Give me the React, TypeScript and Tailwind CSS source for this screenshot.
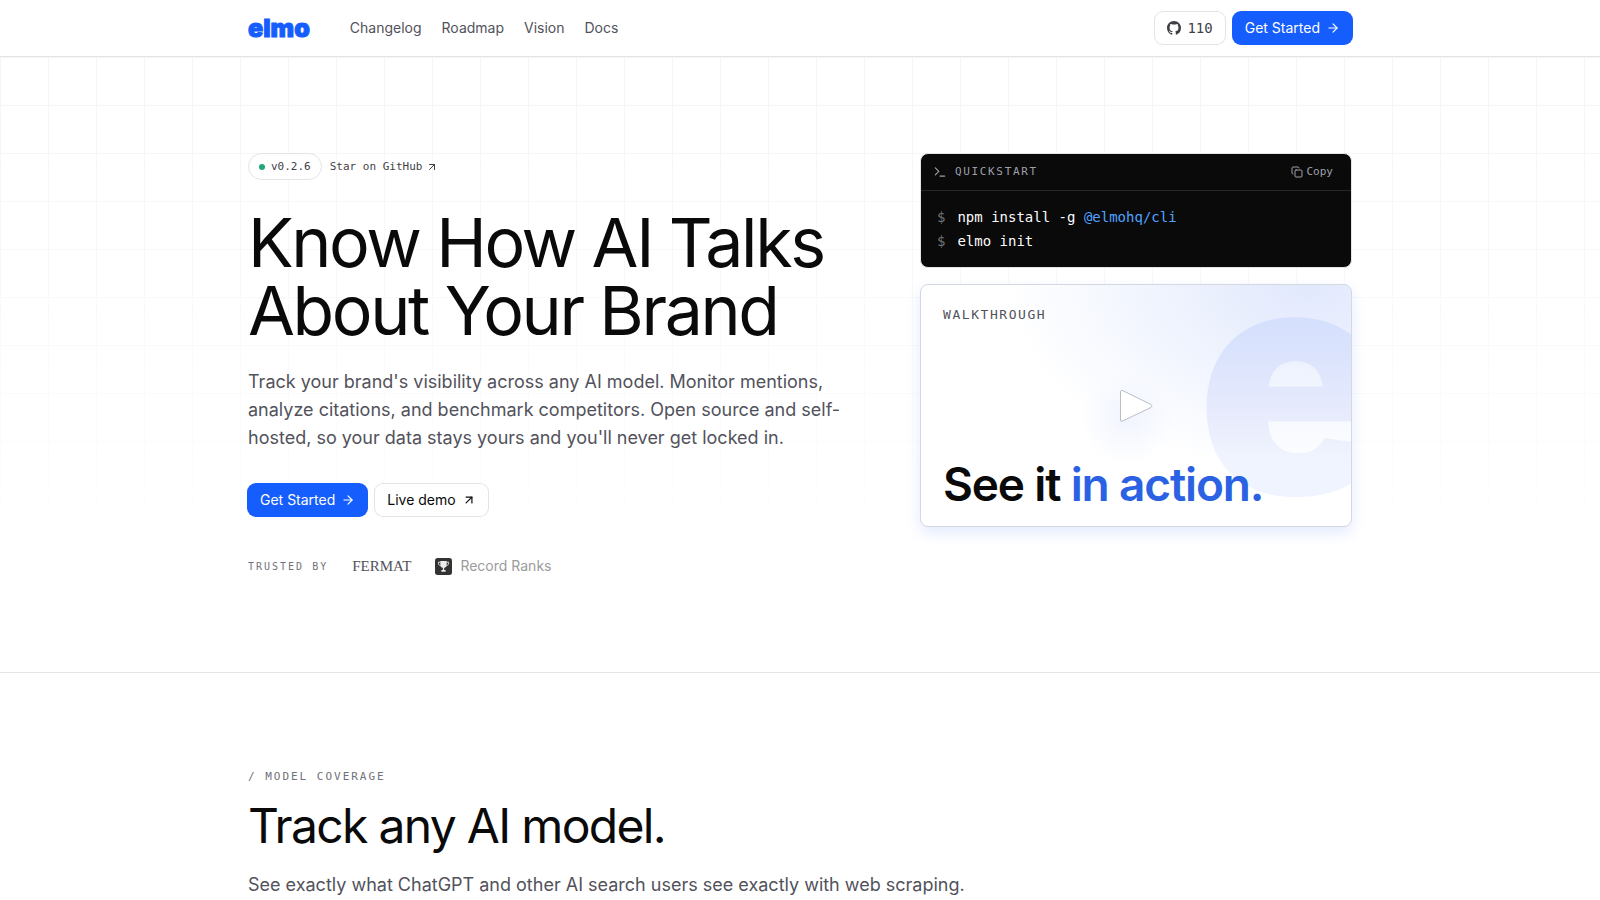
import React from 'react';
import { ArrowRight, ArrowUpRight, Copy, Terminal } from 'lucide-react';

const navLinks = ['Changelog', 'Roadmap', 'Vision', 'Docs'];

const GitHubIcon: React.FC = () => (
  <svg viewBox="0 0 16 16" className="size-3.5" fill="currentColor" aria-hidden="true">
    <path d="M8 0C3.58 0 0 3.58 0 8c0 3.54 2.29 6.53 5.47 7.59.4.07.55-.17.55-.38 0-.19-.01-.82-.01-1.49-2.01.37-2.53-.49-2.69-.94-.09-.23-.48-.94-.82-1.13-.28-.15-.68-.52-.01-.53.63-.01 1.08.58 1.23.82.72 1.21 1.87.87 2.33.66.07-.52.28-.87.51-1.07-1.78-.2-3.64-.89-3.64-3.95 0-.87.31-1.59.82-2.15-.08-.2-.36-1.02.08-2.12 0 0 .67-.21 2.2.82.64-.18 1.32-.27 2-.27s1.36.09 2 .27c1.53-1.04 2.2-.82 2.2-.82.44 1.1.16 1.92.08 2.12.51.56.82 1.27.82 2.15 0 3.07-1.87 3.75-3.65 3.95.29.25.54.73.54 1.48 0 1.07-.01 1.93-.01 2.2 0 .21.15.46.55.38A8.01 8.01 0 0 0 16 8c0-4.42-3.58-8-8-8z" />
  </svg>
);

const TrophyBadge: React.FC = () => (
  <svg viewBox="0 0 16 16" className="size-[17px]" aria-hidden="true">
    <rect width="16" height="16" rx="2.5" fill="#333" />
    <path d="M5 2.8h6v3.4c0 2-1.2 3.3-3 3.3S5 8.2 5 6.2z" fill="#ececec" />
    <path d="M5 4H3.2c0 2 .6 3 2.2 3.4M11 4h1.8c0 2-.6 3-2.2 3.4" fill="none" stroke="#ececec" strokeWidth=".9" />
    <path d="M7.4 9h1.2v2.4H10v1.5H6v-1.5h1.4z" fill="#ececec" />
  </svg>
);

const GetStarted: React.FC = () => (
  <a
    href="#start"
    className="flex h-8 items-center gap-1.5 rounded-lg bg-[#155dfc] px-3 text-sm text-white ring-1 ring-[#155dfc]"
  >
    Get Started
    <ArrowRight className="size-3.5" />
  </a>
);

const Header: React.FC = () => (
  <header className="border-b border-[#e4e4e7] bg-white">
    <div className="mx-auto flex h-14 max-w-6xl items-center justify-between px-6">
      <div className="flex items-center gap-10">
        <a
          href="#home"
          className="text-[25px] leading-8 font-black text-[#155dfc] [-webkit-text-stroke:1px_#155dfc]"
        >
          elmo
        </a>
        <nav className="flex gap-5 text-sm text-[#52525b]">
          {navLinks.map((link) => (
            <a key={link} href={`#${link.toLowerCase()}`}>
              {link}
            </a>
          ))}
        </nav>
      </div>
      <div className="flex items-center gap-2">
        <a
          href="#github"
          className="flex h-8 items-center gap-1.5 rounded-lg bg-white px-3 font-['DejaVu_Sans_Mono',monospace] text-sm text-[#3f3f46] ring-1 ring-[#e4e4e7]"
        >
          <GitHubIcon />
          110
        </a>
        <GetStarted />
      </div>
    </div>
  </header>
);

const Quickstart: React.FC = () => (
  <div className="overflow-hidden rounded-lg border border-[#e4e4e7] bg-[#0a0a0a] font-['DejaVu_Sans_Mono',monospace]">
    <div className="flex h-[37px] items-center justify-between border-b border-[#27272a] px-3 text-[11px] text-[#9f9fa9]">
      <div className="flex items-center gap-2">
        <Terminal className="size-3.5" />
        <span className="tracking-[0.15em]">QUICKSTART</span>
      </div>
      <button type="button" className="flex items-center gap-1 px-1.5">
        <Copy className="size-3" />
        Copy
      </button>
    </div>
    <div className="px-4 py-3.5 text-sm leading-6 text-[#fafafa]">
      <div className="flex gap-3">
        <span className="text-[#71717b]">$</span>
        <code className="font-['DejaVu_Sans_Mono',monospace]">
          npm install -g <span className="text-[#51a2ff]">@elmohq/cli</span>
        </code>
      </div>
      <div className="flex gap-3">
        <span className="text-[#71717b]">$</span>
        <code className="font-['DejaVu_Sans_Mono',monospace]">elmo init</code>
      </div>
    </div>
  </div>
);

const Walkthrough: React.FC = () => (
  <button
    type="button"
    aria-label="Play walkthrough"
    className="relative flex aspect-video w-full flex-col justify-between overflow-hidden rounded-lg border border-[#d4d8e0] bg-white bg-[radial-gradient(ellipse_at_90%_0%,#e2e8fd_0%,#f1f5fe_30%,transparent_55%),radial-gradient(circle_at_48%_55%,#f0f4fe_0%,transparent_18%)] px-[22px] pt-5 pb-3 text-left shadow-[0_6px_14px_rgba(21,93,252,0.12)]"
  >
    <span
      aria-hidden="true"
      className="absolute -right-10 -bottom-3 bg-linear-to-b from-[#d3dffd] from-30% via-[#e6eafc] via-60% to-[#eff4fe] to-75% bg-clip-text text-[320px] leading-[320px] font-black text-transparent"
    >
      e
    </span>
    <svg viewBox="0 0 34 34" className="absolute top-1/2 left-1/2 size-[34px] -translate-1/2" aria-hidden="true">
      <path d="M1.5 3v28q0 2 2 1L32 18.5q2-1.5 0-3L3.5 1.5q-2-.8-2 1.5z" fill="#fff" stroke="#a9adb8" strokeWidth=".8" />
    </svg>
    <span className="relative font-['DejaVu_Sans_Mono',monospace] text-[13px] leading-5 tracking-[0.12em] text-[#52525b]">
      WALKTHROUGH
    </span>
    <span className="relative text-[46px] leading-[60px] font-semibold tracking-tight text-[#0a0a0a]">
      See it <span className="text-[#2b62e3]">in action.</span>
    </span>
  </button>
);

const Hero: React.FC = () => (
  <section className="relative border-b border-[#e4e4e7]">
    <div className="absolute inset-0 bg-[linear-gradient(to_right,#f4f4f5_1px,transparent_1px),linear-gradient(to_bottom,#f4f4f5_1px,transparent_1px)] bg-size-[48px_48px] mask-[linear-gradient(to_bottom,black,transparent_85%)]" />
    <div className="relative mx-auto grid max-w-6xl grid-cols-12 gap-12 px-6 py-24">
      <div className="col-span-7">
        <div className="flex items-center gap-2 font-['DejaVu_Sans_Mono',monospace] text-[11px] leading-[25px] text-[#3f3f46]">
          <span className="flex items-center gap-1.5 rounded-full border border-[#e4e4e7] bg-white px-2.5">
            <span className="size-1.5 rounded-full bg-[#22a67a]" />
            v0.2.6
          </span>
          <a href="#star" className="flex items-center gap-1">
            Star on GitHub
            <ArrowUpRight className="size-3" />
          </a>
        </div>
        <h1 className="mt-7 text-[68px] leading-[68px] tracking-[-0.035em] text-[#0a0a0a]">
          Know How AI Talks
          <br />
          About Your Brand
        </h1>
        <p className="mt-6 text-lg leading-7 text-[#52525b]">
          Track your brand's visibility across any AI model. Monitor mentions, analyze citations, and benchmark
          competitors. Open source and self-hosted, so your data stays yours and you'll never get locked in.
        </p>
        <div className="mt-8 flex gap-2">
          <GetStarted />
          <a
            href="#demo"
            className="flex h-8 items-center gap-1.5 rounded-lg bg-white px-3 text-sm text-[#0a0a0a] ring-1 ring-[#e4e4e7]"
          >
            Live demo
            <ArrowUpRight className="size-3.5" />
          </a>
        </div>
        <div className="mt-10 flex h-5 items-center gap-6">
          <span className="font-['DejaVu_Sans_Mono',monospace] text-[10px] tracking-[0.2em] text-[#71717b]">
            TRUSTED BY
          </span>
          <span className="font-['Liberation_Serif',serif] text-[15px] text-[#52525b]">FERMAT</span>
          <span className="flex items-center gap-2 text-sm text-[#9b9b9b]">
            <TrophyBadge />
            Record Ranks
          </span>
        </div>
      </div>
      <div className="col-span-5 flex flex-col gap-4">
        <Quickstart />
        <Walkthrough />
      </div>
    </div>
  </section>
);

const ModelCoverage: React.FC = () => (
  <section className="mx-auto max-w-6xl px-6 py-24">
    <p className="font-['DejaVu_Sans_Mono',monospace] text-[11px] leading-4 tracking-[0.18em] text-[#71717b]">
      / MODEL COVERAGE
    </p>
    <h2 className="mt-4 text-5xl leading-[50px] tracking-[-0.035em] text-[#0a0a0a]">Track any AI model.</h2>
    <p className="mt-5 text-lg leading-7 text-[#52525b]">
      See exactly what ChatGPT and other AI search users see exactly with web scraping.
    </p>
  </section>
);

const App: React.FC = () => (
  <div className="min-h-screen bg-white font-['Inter',sans-serif]">
    <Header />
    <main>
      <Hero />
      <ModelCoverage />
    </main>
  </div>
);

export default App;
